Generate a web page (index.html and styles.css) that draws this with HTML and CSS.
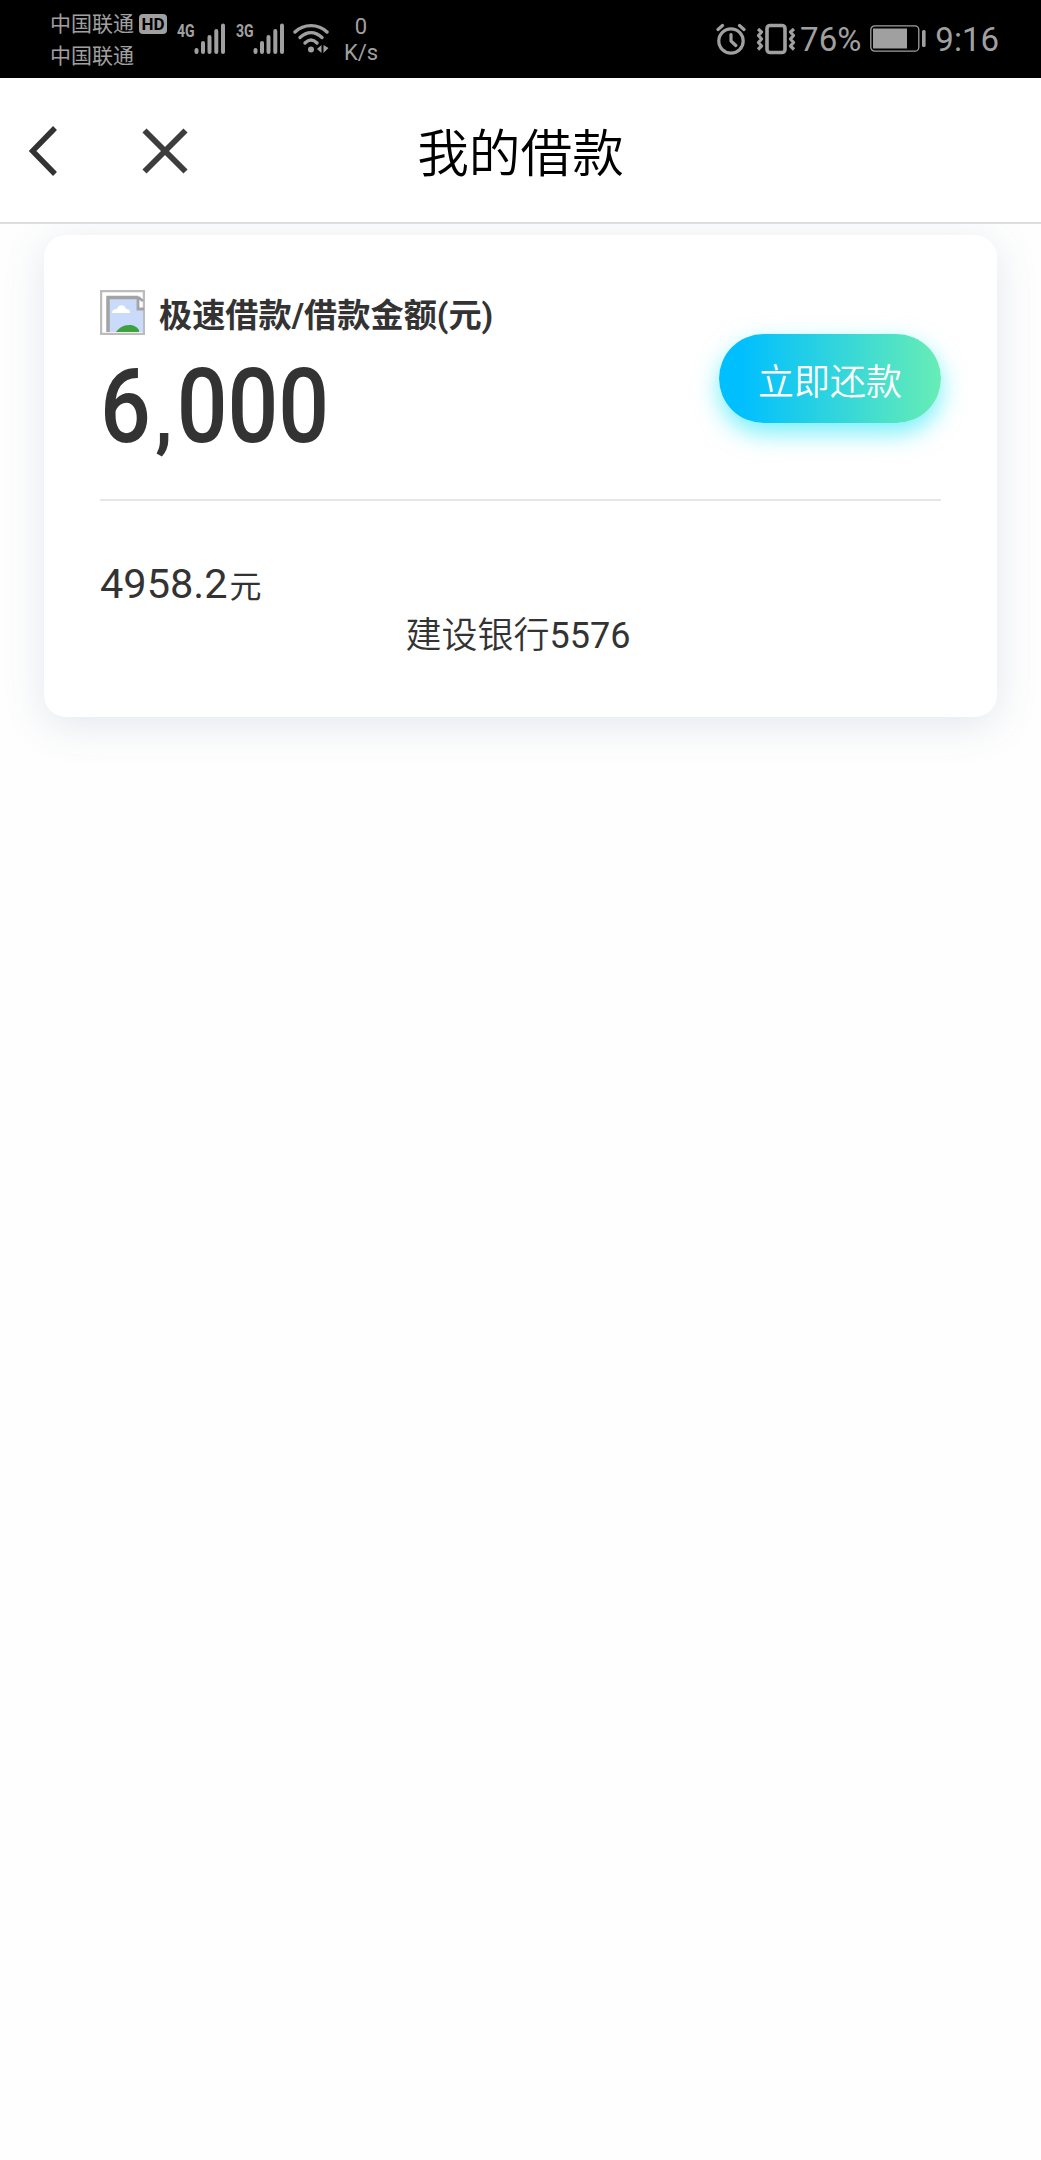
FILE: index.html
```html
<!DOCTYPE html>
<html lang="zh-CN">
<head>
  <meta charset="UTF-8">
  <meta name="viewport" content="width=device-width, initial-scale=1.0">
  <title>我的借款</title>
  <link rel="stylesheet" href="styles.css">
</head>
<body>
  <!-- Phone status bar -->
  <div class="status-bar">
    <div class="carriers">
      <div class="carrier"><span>中国联通</span><span class="hd"><b>HD</b></span></div>
      <div class="carrier"><span>中国联通</span></div>
    </div>
    <div class="signal">
      <span class="net">4G</span>
      <svg width="32" height="32" viewBox="0 0 32 32">
        <path d="M2.500 28v2M9 21v9M15.500 15v15M22.300 9v21M29 3.500v26.500" stroke="#a0a0a0" stroke-width="4" stroke-linecap="round"/>
      </svg>
    </div>
    <div class="signal second">
      <span class="net">3G</span>
      <svg width="32" height="32" viewBox="0 0 32 32">
        <path d="M2.500 28v2M9 21v9M15.500 15v15M22.300 9v21M29 3.500v26.500" stroke="#a0a0a0" stroke-width="4" stroke-linecap="round"/>
      </svg>
    </div>
    <svg class="wifi" width="36" height="32" viewBox="0 0 36 32">
      <g fill="none" stroke="#a0a0a0" stroke-width="3.400" stroke-linecap="round">
        <path d="M2 10C11 1.500 25 1.500 34 10"/>
        <path d="M7 15.500C14 9 22 9 29 15.500"/>
        <path d="M12 21C16 17 20 17 24 21"/>
      </g>
      <circle cx="18" cy="27.500" r="3" fill="#a0a0a0"/>
      <path d="M28.500 23v8l-4.500-4zM30.500 23l5 3-5 5z" fill="#a0a0a0"/>
    </svg>
    <div class="speed"><span>0</span><span>K/s</span></div>

    <div class="status-right">
      <svg class="alarm" width="30" height="32" viewBox="0 0 30 32">
        <g fill="none" stroke="#a0a0a0" stroke-width="3.200" stroke-linecap="round" stroke-linejoin="round">
          <circle cx="15" cy="18" r="12.200"/>
          <path d="M15 11.500v6.500l4.800 4.500M2 6.500l4.500-4M28 6.500l-4.500-4"/>
        </g>
      </svg>
      <svg class="vibrate" width="40" height="32" viewBox="0 0 40 32">
        <g fill="none" stroke="#a0a0a0" stroke-linejoin="round">
          <rect x="11" y="2.500" width="18" height="27" rx="3" stroke-width="3.600"/>
          <path d="M2 6l3.500 3-3 3.500 3 3.500-3 3.500 3 3.500L2 26.500M38 6l-3.500 3 3 3.500-3 3.500 3 3.500-3 3.500 3.500 3.500" stroke-width="3.200"/>
        </g>
      </svg>
      <span class="percent">76%</span>
      <svg class="battery" width="56" height="28" viewBox="0 0 56 28">
        <rect x="0.800" y="0.800" width="48" height="25.400" rx="4" fill="none" stroke="#a0a0a0" stroke-width="1.300"/>
        <rect x="3" y="3.500" width="34" height="20" fill="#a0a0a0"/>
        <rect x="52" y="5" width="3.600" height="17" rx="1.500" fill="#a0a0a0"/>
      </svg>
      <span class="clock">9:16</span>
    </div>
  </div>

  <!-- Page header -->
  <header class="nav">
    <div class="nav-icons">
      <svg width="28" height="50" viewBox="0 0 28 50">
        <path d="M26 2L3.500 25L26 48" fill="none" stroke="#333" stroke-width="5.500"/>
      </svg>
      <svg class="close" width="46" height="46" viewBox="0 0 46 46">
        <path d="M2.500 2.500l41 41M43.500 2.500l-41 41" stroke="#3d3d3d" stroke-width="5.800"/>
      </svg>
    </div>
    <h1 class="title">我的借款</h1>
  </header>

  <!-- Loan card -->
  <main class="card">
    <section class="card-top">
      <div class="loan">
        <div class="label">
          <svg width="45" height="45" viewBox="0 0 45 45">
            <rect x="1" y="1" width="43" height="43" fill="#fff" stroke="#bcbcbc" stroke-width="2.500"/>
            <path d="M9 9h28v10h6v23H9z" fill="#c9dafa"/>
            <path d="M12 23c0-4 4-4 5-4 1-5 8-5 9 0 3 0 4 1 4 4z" fill="#fff"/>
            <path d="M16 42c3-4 7-7 13-7 5 0 8 2 10 5v2z" fill="#3da23d"/>
            <path d="M8 42V7.500H38" fill="none" stroke="#a3a3a3" stroke-width="3.500"/>
            <path d="M38 7v12h6M38 7l5 4" fill="none" stroke="#a3a3a3" stroke-width="2.800"/>
          </svg>
          <span>极速借款/借款金额(元)</span>
        </div>
        <div class="amount">6<span class="comma">,</span>000</div>
      </div>
      <button class="repay">立即还款</button>
    </section>
    <section class="card-bottom">
      <div class="due">4958.2<span class="unit">元</span></div>
      <div class="bank">建设银行<span class="tail">5576</span></div>
    </section>
  </main>
</body>
</html>
```
FILE: styles.css
```css
* {
  box-sizing: border-box;
}

body {
  margin: 0;
  min-height: 2160px;
  background: #fefefe;
  color: #333;
  font-family: Roboto, "Noto Sans CJK SC", sans-serif;
}

svg {
  display: block;
  flex: none;
}

/* Status bar */
.status-bar {
  display: flex;
  height: 78px;
  padding-left: 50px;
  background: #000;
  color: #a0a0a0;
}

.carriers {
  width: 127px;
  padding-top: 8px;
  font-size: 21px;
  line-height: 32px;
}

.carrier {
  display: flex;
  align-items: center;
  gap: 5px;
  height: 32px;
  white-space: nowrap;
}

.hd {
  width: 28px;
  height: 20px;
  border-radius: 4px;
  background: #a0a0a0;
  color: #000;
  font-size: 17px;
  line-height: 20px;
  text-align: center;
}

.signal {
  display: flex;
  height: 32px;
  margin-top: 22px;
}

.net {
  width: 17px;
  font-size: 18px;
  font-weight: 700;
  line-height: 18px;
  transform: scaleX(0.78);
  transform-origin: left;
}

.signal.second {
  margin-left: 10px;
}

.wifi {
  margin: 22px 0 0 8px;
}

.speed {
  display: flex;
  flex-direction: column;
  align-items: center;
  width: 36px;
  margin: 14px 0 0 14px;
  font-size: 22px;
  line-height: 26px;
}

.status-right {
  display: flex;
  align-items: center;
  margin-left: auto;
  padding-right: 42px;
  font-size: 33px;
}

.vibrate {
  margin-left: 10px;
}

.percent {
  margin-left: 4px;
}

.battery {
  margin-left: 9px;
}

.clock {
  margin-left: 9px;
}

/* Header */
.nav {
  display: grid;
  grid-template-columns: 1fr auto 1fr;
  align-items: center;
  height: 146px;
  border-bottom: 2px solid #dcdedb;
  background: #fff;
}

.nav-icons {
  display: flex;
  align-items: center;
  padding: 2px 0 0 29px;
}

.close {
  margin-left: 85px;
}

.title {
  margin: 0;
  padding-top: 10px;
  color: #000;
  font-size: 51.700px;
  font-weight: 350;
  line-height: 74px;
}

/* Card */
.card {
  height: 482px;
  margin: 11px 44px 0 44px;
  padding: 0 56px;
  border-radius: 22px;
  background: #fff;
  box-shadow: 0 8px 42px rgba(70, 100, 140, 0.15);
  clip-path: inset(-11px -60px -90px -60px);
}

.card-top {
  display: flex;
  justify-content: space-between;
  height: 266px;
  padding-top: 55px;
  border-bottom: 2px solid #e6e6e6;
}

.label {
  display: flex;
  align-items: center;
  gap: 14px;
  height: 45px;
  font-size: 33.200px;
  font-weight: 700;
  white-space: nowrap;
}

.amount {
  margin-top: 9px;
  font-size: 104px;
  font-weight: 500;
  line-height: 126px;
  transform: scaleX(0.86);
  transform-origin: left;
}

.comma {
  display: inline-block;
  width: 30px;
  padding-left: 5px;
  font-size: 74px;
  font-weight: 900;
  line-height: 1;
}

.repay {
  width: 222px;
  height: 89px;
  margin-top: 44px;
  padding: 1px 0 0;
  border: 0;
  border-radius: 45px;
  background: linear-gradient(90deg, #00bfff 10%, #68edb5);
  box-shadow: 0 10px 24px rgba(0, 228, 245, 0.55);
  color: #fff;
  font-family: inherit;
  font-size: 36px;
  font-weight: 350;
}

.card-bottom {
  padding-top: 57px;
}

.due {
  font-size: 41.500px;
  line-height: 52px;
}

.unit {
  margin-left: 2px;
  font-size: 32px;
}

.bank {
  padding-right: 5px;
  font-size: 36px;
  font-weight: 350;
  line-height: 47px;
  text-align: center;
}

.tail {
  font-weight: 400;
}
```
